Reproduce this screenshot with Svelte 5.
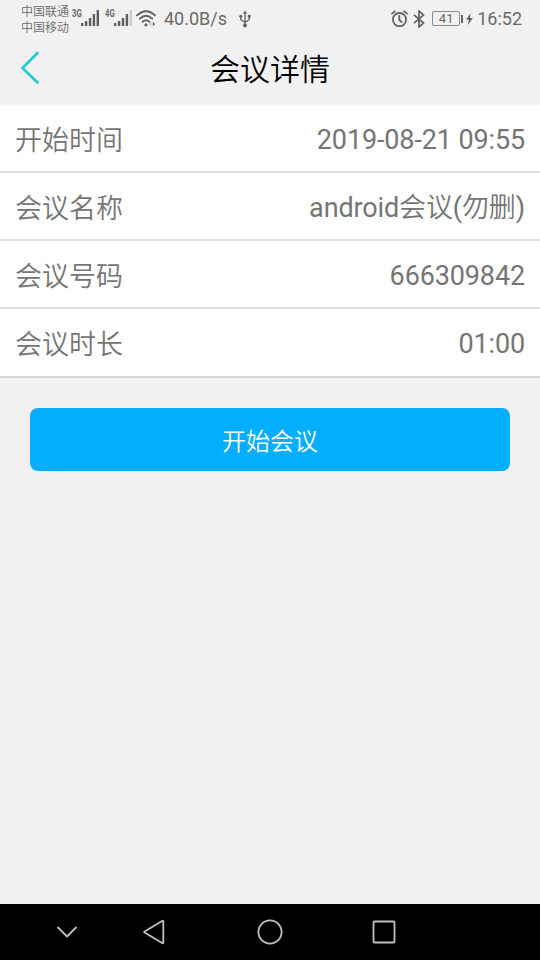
<script>
  // Meeting info, one entry per row
  const rows = [
    { label: '开始时间', value: [{ text: '2019-08-21 09:55' }] },
    {
      label: '会议名称',
      value: [{ text: 'android' }, { text: '会议', cjk: true }, { text: '(' }, { text: '勿删', cjk: true }, { text: ')' }]
    },
    { label: '会议号码', value: [{ text: '666309842' }] },
    { label: '会议时长', value: [{ text: '01:00' }] }
  ];

  const networks = [
    { name: '3G', bars: 5 },
    { name: '4G', bars: 4 }
  ];
</script>

<div class="screen">
  <div class="status-bar">
    <div class="carriers">
      <span>中国联通</span>
      <span>中国移动</span>
    </div>
    {#each networks as network}
      <div class="network">
        <span class="network-name">{network.name}</span>
        <svg class="signal" viewBox="0 0 18 17" width="18" height="17">
          {#each [3, 5, 8, 12, 16] as height, i}
            <rect x={i * 3.9} y={17 - height} width="2.4" {height} rx="0.6" fill={i < network.bars ? '#5c5c5c' : '#cccccc'} />
          {/each}
        </svg>
      </div>
    {/each}
    <svg class="wifi" viewBox="0 0 20 17" width="20" height="17" fill="none" stroke="#626262" stroke-width="1.9" stroke-linecap="round">
      <path d="M1 5.4Q10-2.8 19 5.4" />
      <path d="M3.8 8.6Q10 2.9 16.2 8.6" />
      <path d="M6.7 11.8Q10 8.8 13.3 11.8" />
      <circle cx="10" cy="14.8" r="1.6" fill="#626262" stroke="none" />
      <path d="M15.2 12.1v4l-2-2z" fill="#bbb" stroke="none" />
      <path d="M16.8 11.8v4.4l2.4-2.2z" fill="#626262" stroke="none" />
    </svg>
    <span class="speed">40.0B/s</span>
    <svg class="usb" viewBox="0 0 12 18" width="12" height="18" fill="none" stroke="#626262" stroke-width="1.3">
      <path d="M6 2v13M1.8 6.5v3.2L6 12.3l4.2-2.6V6.5" />
      <path d="M6 .5l2 3.2H4z" fill="#626262" stroke="none" />
      <circle cx="1.8" cy="6.3" r="1.5" fill="#626262" stroke="none" />
      <rect x="8.8" y="4.9" width="2.8" height="2.8" fill="#626262" stroke="none" />
      <circle cx="6" cy="15.5" r="1.9" fill="#626262" stroke="none" />
    </svg>

    <div class="status-right">
      <svg class="alarm" viewBox="0 0 17 18" width="17" height="18" fill="none" stroke="#626262" stroke-width="1.8" stroke-linecap="round">
        <circle cx="8.5" cy="9.6" r="6.6" />
        <path d="M8.3 6v4l2.4 2" />
        <path d="M1 3.6L3.9 1.3M16 3.6l-2.9-2.3" />
      </svg>
      <svg class="bluetooth" viewBox="0 0 12 18" width="12" height="18" fill="none" stroke="#626262" stroke-width="1.7">
        <path d="M1 4.8l9.5 8.3L6 17V1l4.5 3.9L1 13.2" />
      </svg>
      <div class="battery">41</div>
      <div class="battery-tip"></div>
      <svg class="bolt" viewBox="0 0 7 12" width="7" height="12">
        <path d="M4.6 0L.2 6.8h2.6L1.8 12l5-7H4z" fill="#626262" />
      </svg>
      <span class="clock">16:52</span>
    </div>
  </div>

  <header>
    <button class="back" aria-label="返回">
      <svg viewBox="0 0 20 34" width="20" height="34" fill="none" stroke="#25c9db" stroke-width="2.8" stroke-linecap="round" stroke-linejoin="round">
        <path d="M17.5 2L2.5 17l15 14.5" />
      </svg>
    </button>
    <h1>会议详情</h1>
  </header>

  <main>
    <div class="list">
      {#each rows as row}
        <div class="row">
          <span class="label">{row.label}</span>
          <span class="value">{#each row.value as part}<span class:cjk={part.cjk}>{part.text}</span>{/each}</span>
        </div>
      {/each}
    </div>
    <button class="start">开始会议</button>
  </main>

  <nav>
    <svg class="hide" viewBox="0 0 20 12" width="20" height="12">
      <path d="M1 1.5l9 9 9-9" />
    </svg>
    <svg class="nav-back" viewBox="0 0 22 26" width="22" height="26">
      <path d="M20.3 2.2v21.6q0 .8-.8.4L1.6 13.6q-.8-.6 0-1.2L19.5 1.8q.8-.4.8.4z" />
    </svg>
    <svg class="home" viewBox="0 0 26 26" width="26" height="26">
      <circle cx="13" cy="13" r="11.6" />
    </svg>
    <svg class="recent" viewBox="0 0 24 24" width="24" height="24">
      <rect x="1.5" y="1.5" width="21" height="21" rx="0.8" />
    </svg>
  </nav>
</div>

<style>
  :global(body) {
    margin: 0;
  }

  .screen {
    display: flex;
    flex-direction: column;
    width: 540px;
    height: 960px;
    background: #f1f1f1;
    font-family: Roboto, 'Noto Sans CJK SC', sans-serif;
    overflow: hidden;
  }

  .status-bar {
    display: flex;
    align-items: center;
    height: 37px;
    padding: 0 18px 0 21px;
    box-sizing: border-box;
    color: #6a6a6a;
  }

  .carriers {
    display: flex;
    flex-direction: column;
    width: 51px;
    padding-top: 2px;
    font-size: 12px;
    line-height: 16px;
    font-weight: 350;
    white-space: nowrap;
  }

  .network {
    display: flex;
    align-items: flex-start;
    width: 32.5px;
    height: 19px;
  }

  .network-name {
    width: 9px;
    font-size: 11px;
    line-height: 9px;
    font-weight: 700;
    transform: scaleX(0.7);
    transform-origin: left;
  }

  .wifi {
    margin-left: -1px;
  }

  .speed {
    width: 63px;
    margin-left: 8px;
    font-size: 18px;
  }

  .usb {
    margin-left: 12px;
  }

  .status-right {
    display: flex;
    align-items: center;
    margin-left: auto;
  }

  .bluetooth {
    margin-left: 5px;
  }

  .battery {
    width: 28px;
    height: 15px;
    margin-left: 7px;
    box-sizing: border-box;
    border: 1px solid #8c8c8c;
    border-radius: 2px;
    font-size: 13px;
    line-height: 14px;
    text-align: center;
  }

  .battery-tip {
    width: 2px;
    height: 8px;
    margin-left: 1px;
    background: #626262;
  }

  .bolt {
    margin-left: 3px;
  }

  .clock {
    margin-left: 4px;
    font-size: 18px;
  }

  header {
    display: grid;
    grid-template-columns: 60px 1fr 60px;
    align-items: center;
    height: 68px;
  }

  button {
    padding: 0;
    border: none;
    font-family: inherit;
    cursor: pointer;
  }

  .back {
    display: flex;
    width: 60px;
    padding: 0 0 7px 20px;
    box-sizing: border-box;
    background: none;
  }

  h1 {
    margin: 0;
    padding-bottom: 3px;
    color: #000;
    font-size: 30px;
    line-height: 44px;
    font-weight: 350;
    text-align: center;
  }

  main {
    flex: 1;
  }

  .list {
    background: #fff;
    border-bottom: 2px solid #d6d6da;
  }

  .row {
    display: flex;
    align-items: center;
    justify-content: space-between;
    height: 68px;
    padding: 5px 15px 0;
    box-sizing: border-box;
    border-bottom: 2px solid #dedee0;
    color: #757575;
    font-size: 27px;
    line-height: 40px;
  }

  .row:last-child {
    height: 67px;
    border-bottom-width: 1px;
    border-bottom-color: #fff;
  }

  .value {
    margin-top: -1px;
    letter-spacing: -0.13px;
  }

  .label,
  .cjk {
    font-weight: 350;
  }

  .start {
    display: block;
    width: 480px;
    height: 63px;
    margin: 30px auto 0;
    border-radius: 8px;
    background: #03adff;
    color: #fff;
    font-size: 24px;
    font-weight: 350;
  }

  nav {
    display: flex;
    align-items: center;
    height: 56px;
    background: #000;
  }

  nav svg {
    fill: none;
    stroke: #c0c0c0;
    stroke-width: 1.8;
    stroke-linecap: round;
    stroke-linejoin: round;
  }

  .hide {
    margin-left: 57px;
  }

  .nav-back {
    margin-left: 66px;
  }

  .home {
    margin-left: 92px;
  }

  .recent {
    margin-left: 89px;
  }
</style>
